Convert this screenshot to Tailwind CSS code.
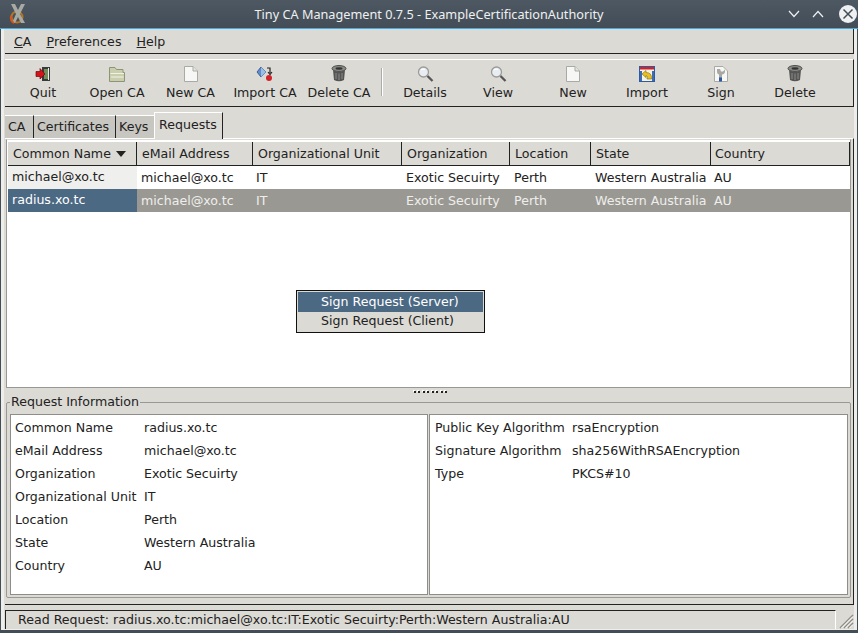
<!DOCTYPE html>
<html lang="en">
<head>
  <meta charset="UTF-8" />
  <title>Tiny CA Management</title>
  <script src="https://cdn.jsdelivr.net/npm/@tailwindcss/browser@4"></script>
</head>
<body class="w-[858px] h-[633px] overflow-hidden relative bg-[#dcdad5] flex flex-col font-['DejaVu_Sans',sans-serif] text-[12.6px] leading-[16px] text-[#222]">

  <!-- title bar -->
  <div class="h-[28px] shrink-0 flex items-center relative bg-gradient-to-b from-[#4d5862] to-[#434d57] text-[#eff0f1] font-['Noto_Sans',sans-serif] text-[12.7px]">
    <svg class="absolute left-[8px] top-[3px]" width="20" height="21" viewBox="0 0 20 21">
      <circle cx="9" cy="14" r="5.5" fill="none" stroke="#b5761f" stroke-width="2" />
      <path d="M3 1 L7 1 L10 7 L13 1 L17 1 L12 11 L17 20 L13 20 L10 14 L7 20 L4 20 L8 11 Z" fill="#a9a9a4" />
      <path d="M3 13 Q2 18 6 20" fill="none" stroke="#d4541c" stroke-width="2" />
    </svg>
    <div class="w-full text-center">Tiny CA Management 0.7.5 - ExampleCertificationAuthority</div>
    <svg class="absolute right-[58px] top-[10px]" width="12" height="8" viewBox="0 0 12 8"><path d="M1 1 L6 6.5 L11 1" fill="none" stroke="#eff0f1" stroke-width="1.2" /></svg>
    <svg class="absolute right-[34px] top-[10px]" width="12" height="8" viewBox="0 0 12 8"><path d="M1 7 L6 1.5 L11 7" fill="none" stroke="#eff0f1" stroke-width="1.2" /></svg>
    <svg class="absolute right-[1px] top-[5px]" width="18" height="18" viewBox="0 0 18 18"><circle cx="9" cy="9" r="9" fill="#eff0f1" /><path d="M4.500 4.500 L13.500 13.500 M13.500 4.500 L4.500 13.500" stroke="#434d57" stroke-width="1.500" /></svg>
  </div>
  <div class="h-px shrink-0 bg-[#3daee9]"></div>

  <!-- window content -->
  <div class="flex-1 min-h-0 flex flex-col border-l-[1px] border-r-[1px] border-[#434d57]">
    <div class="flex-1 min-h-0 flex flex-col border-l-[3px] border-r-[3px] border-[#eeedea]">

      <!-- menu bar -->
      <div class="h-[25px] shrink-0 ml-px flex items-center gap-[15px] pl-[9px] pt-[1px] border-b-[1px] border-r-[1px] border-[#222]">
        <span><u>C</u>A</span>
        <span class="tracking-[0.1px]"><u>P</u>references</span>
        <span><u>H</u>elp</span>
      </div>

      <!-- toolbar -->
      <div class="h-[48px] shrink-0 mt-[5px] ml-px flex border-t-[1px] border-t-white border-b-[1px] border-r-[1px] border-[#222]">
        <div class="w-[76px] flex flex-col items-center">
          <svg class="mt-[6px]" width="16" height="16" viewBox="0 0 16 16"><rect x="7" y="1" width="8" height="14" fill="#3a3a3a" /><rect x="9" y="3" width="4" height="10" fill="#6f8f5f" /><rect x="13" y="2" width="1" height="12" fill="#eee" /><path d="M1 5.500 H5 V2.500 L10 8 L5 13 V10.500 H1 Z" fill="#d3141c" stroke="#6e0a0e" stroke-width="0.7" /></svg>
          <span class="mt-[3px]">Quit</span>
        </div>
        <div class="w-[72px] flex flex-col items-center">
          <svg class="mt-[6px]" width="16" height="16" viewBox="0 0 16 16"><path d="M0.500 15.500 V1.500 H6 L7.500 3.500 H14 V6.500 H15.500 V15.500 Z" fill="#c9cfae" stroke="#8e9476" stroke-width="1" /><path d="M1.500 7.500 H15 M2 11 H14.500" stroke="#f1f3e2" stroke-width="1" /></svg>
          <span class="mt-[3px]">Open CA</span>
        </div>
        <div class="w-[75px] flex flex-col items-center">
          <svg class="mt-[6px]" width="16" height="16" viewBox="0 0 16 16"><path d="M1.500 0.500 H10 L14.500 5 V15.500 H1.500 Z" fill="#f7f7f5" stroke="#a9a9a5" stroke-width="1" /><path d="M10 0.500 V5 H14.500" fill="#e4e4e0" stroke="#a9a9a5" stroke-width="1" /></svg>
          <span class="mt-[3px]">New CA</span>
        </div>
        <div class="w-[74px] flex flex-col items-center">
          <svg class="mt-[6px]" width="18" height="16" viewBox="0 0 18 16"><path d="M5 1 L10 6 L5 11 L1 6 Z" fill="#5d8fd0" stroke="#27497c" stroke-width="0.8" /><path d="M5 1 L10 6 L5 11 Z" fill="#9dbde6" /><path d="M11 2 H14 V7 M12 6 L14 8.500 L16 6" fill="none" stroke="#222" stroke-width="1.200" /><circle cx="13" cy="12" r="3" fill="#d3222a" /></svg>
          <span class="mt-[3px] whitespace-nowrap">Import CA</span>
        </div>
        <div class="w-[74px] flex flex-col items-center">
          <svg class="mt-[5px]" width="16" height="17" viewBox="0 0 16 17"><ellipse cx="8" cy="3.500" rx="7" ry="3" fill="#8a8a86" stroke="#333" stroke-width="0.8" /><ellipse cx="8" cy="3.500" rx="3.500" ry="1.200" fill="#333" /><path d="M2 5 L3 15 Q8 17.500 13 15 L14 5 Q8 8 2 5 Z" fill="#555" /><path d="M5 8 V14 M8 8.500 V15 M11 8 V14" stroke="#8d8d8a" stroke-width="1" /></svg>
          <span class="mt-[3px] whitespace-nowrap">Delete CA</span>
        </div>
        <div class="w-[12px] flex justify-center pt-[8px]"><div class="w-[2px] h-[28px] bg-white border-l border-[#aaa]"></div></div>
        <div class="w-[74px] flex flex-col items-center">
          <svg class="mt-[6px]" width="17" height="16" viewBox="0 0 17 16"><circle cx="6.500" cy="6" r="5" fill="#e8edf2" stroke="#9b9b98" stroke-width="1.300" /><path d="M4 4 Q6 2.500 8 3.500" fill="none" stroke="#fff" stroke-width="1.200" /><path d="M10.500 10 L15.500 15" stroke="#555" stroke-width="2.300" /></svg>
          <span class="mt-[3px]">Details</span>
        </div>
        <div class="w-[72px] flex flex-col items-center">
          <svg class="mt-[6px]" width="17" height="16" viewBox="0 0 17 16"><circle cx="6.500" cy="6" r="5" fill="#e8edf2" stroke="#9b9b98" stroke-width="1.300" /><path d="M4 4 Q6 2.500 8 3.500" fill="none" stroke="#fff" stroke-width="1.200" /><path d="M10.500 10 L15.500 15" stroke="#555" stroke-width="2.300" /></svg>
          <span class="mt-[3px]">View</span>
        </div>
        <div class="w-[78px] flex flex-col items-center">
          <svg class="mt-[6px]" width="16" height="16" viewBox="0 0 16 16"><path d="M1.500 0.500 H10 L14.500 5 V15.500 H1.500 Z" fill="#f7f7f5" stroke="#a9a9a5" stroke-width="1" /><path d="M10 0.500 V5 H14.500" fill="#e4e4e0" stroke="#a9a9a5" stroke-width="1" /></svg>
          <span class="mt-[3px]">New</span>
        </div>
        <div class="w-[70px] flex flex-col items-center">
          <svg class="mt-[6px]" width="16" height="16" viewBox="0 0 16 16"><rect x="0.500" y="0.500" width="15" height="15" fill="#f4f2e4" stroke="#2d5aa0" /><rect x="1" y="1" width="14" height="2.500" fill="#d3222a" /><rect x="1" y="5" width="2" height="10" fill="#3d6cb5" /><rect x="13" y="5" width="2" height="10" fill="#3d6cb5" /><path d="M3 8 L7 4.500 V6.500 Q13 6.500 12.500 13 H8 Q9 9.500 7 9.500 V11.500 Z" fill="#e9c01f" stroke="#7d6a10" stroke-width="0.6" /></svg>
          <span class="mt-[3px]">Import</span>
        </div>
        <div class="w-[78px] flex flex-col items-center">
          <svg class="mt-[6px]" width="16" height="16" viewBox="0 0 16 16"><path d="M1.500 0.500 H10 L14.500 5 V15.500 H1.500 Z" fill="#f7f7f5" stroke="#a9a9a5" stroke-width="1" /><path d="M4 3 V6 Q4 8 6 8.500 V15 H9 V8.500 Q12 8 12 5.500 V3.500 L10 5.500 H8 L7 3 Z" fill="#a8a8a4" /><rect x="6" y="11.500" width="3" height="4" fill="#2d5aa0" /></svg>
          <span class="mt-[3px]">Sign</span>
        </div>
        <div class="w-[70px] flex flex-col items-center">
          <svg class="mt-[5px]" width="16" height="17" viewBox="0 0 16 17"><ellipse cx="8" cy="3.500" rx="7" ry="3" fill="#8a8a86" stroke="#333" stroke-width="0.8" /><ellipse cx="8" cy="3.500" rx="3.500" ry="1.200" fill="#333" /><path d="M2 5 L3 15 Q8 17.500 13 15 L14 5 Q8 8 2 5 Z" fill="#555" /><path d="M5 8 V14 M8 8.500 V15 M11 8 V14" stroke="#8d8d8a" stroke-width="1" /></svg>
          <span class="mt-[3px]">Delete</span>
        </div>
      </div>

      <!-- tabs -->
      <div class="h-[31px] shrink-0 ml-px flex items-end">
        <div class="h-[23px] w-[29px] bg-[#c8c6c1] border-t border-t-white border-r border-r-[#222] pl-[3px] pt-[3px]">CA</div>
        <div class="h-[23px] w-[82px] bg-[#c8c6c1] border-t border-t-white border-r border-r-[#222] pl-[3px] pt-[3px]">Certificates</div>
        <div class="h-[23px] w-[38px] bg-[#c8c6c1] border-t border-t-white pl-[3px] pt-[3px]">Keys</div>
        <div class="h-[27px] w-[69px] -mb-px relative bg-[#dcdad5] border-t border-l border-white border-r-[1px] border-r-[#222] pl-[4px] pt-[4px]">Requests</div>
      </div>

      <!-- notebook page -->
      <div class="h-[467px] shrink-0 ml-px border-t border-t-white border-r border-r-[#222] border-b border-b-[#222]">

        <!-- request list -->
        <div class="h-[249px] ml-px mr-[2px] pt-[1px] pl-px bg-white border border-[#9a9892] border-t-[#dcdad5]">
          <div class="grid grid-cols-[129px_116px_149px_108px_81px_120px_139px] h-[25px] bg-[#dcdad5] border-t border-t-white border-b border-b-[#222]">
            <div class="border-r border-[#222] pl-[5px] pt-[4px] flex items-start gap-[5px]">Common Name
              <svg class="mt-[5px]" width="10" height="6" viewBox="0 0 10 6"><path d="M0 0 H10 L5 6 Z" fill="#222" /></svg>
            </div>
            <div class="border-r border-[#222] pl-[5px] pt-[4px]">eMail Address</div>
            <div class="border-r border-[#222] pl-[5px] pt-[4px]">Organizational Unit</div>
            <div class="border-r border-[#222] pl-[5px] pt-[4px]">Organization</div>
            <div class="border-r border-[#222] pl-[5px] pt-[4px]">Location</div>
            <div class="border-r border-[#222] pl-[5px] pt-[4px]">State</div>
            <div class="border-r border-[#222] pl-[4px] pt-[4px]">Country</div>
          </div>
          <div class="grid grid-cols-[129px_116px_149px_108px_81px_120px_139px] h-[23px] items-center">
            <div class="h-full bg-[#efefed] pl-[4px] pt-[3px]">michael@xo.tc</div>
            <div class="pl-[4px]">michael@xo.tc</div>
            <div class="pl-[3px]">IT</div>
            <div class="pl-[4px]">Exotic Secuirty</div>
            <div class="pl-[4px]">Perth</div>
            <div class="pl-[4px] whitespace-nowrap">Western Australia</div>
            <div class="pl-[3px]">AU</div>
          </div>
          <div class="grid grid-cols-[129px_116px_149px_108px_81px_120px_139px] h-[23px] items-center bg-[#9a9892] text-[#eeeeec]">
            <div class="h-full bg-[#4b6983] text-white pl-[4px] pt-[3px]">radius.xo.tc</div>
            <div class="pl-[4px]">michael@xo.tc</div>
            <div class="pl-[3px]">IT</div>
            <div class="pl-[4px]">Exotic Secuirty</div>
            <div class="pl-[4px]">Perth</div>
            <div class="pl-[4px] whitespace-nowrap">Western Australia</div>
            <div class="pl-[3px]">AU</div>
          </div>
        </div>

        <!-- pane handle -->
        <div class="h-[14px] flex justify-center items-start pt-[3px] pl-[3px]">
          <div class="w-[34px] flex justify-between">
            <i class="w-[2px] h-[2px] bg-[#222] shadow-[-1px_-1px_0_#fff]"></i><i class="w-[2px] h-[2px] bg-[#222] shadow-[-1px_-1px_0_#fff]"></i><i class="w-[2px] h-[2px] bg-[#222] shadow-[-1px_-1px_0_#fff]"></i><i class="w-[2px] h-[2px] bg-[#222] shadow-[-1px_-1px_0_#fff]"></i><i class="w-[2px] h-[2px] bg-[#222] shadow-[-1px_-1px_0_#fff]"></i><i class="w-[2px] h-[2px] bg-[#222] shadow-[-1px_-1px_0_#fff]"></i><i class="w-[2px] h-[2px] bg-[#222] shadow-[-1px_-1px_0_#fff]"></i><i class="w-[2px] h-[2px] bg-[#222] shadow-[-1px_-1px_0_#fff]"></i>
          </div>
        </div>

        <!-- request information -->
        <div class="relative h-[196px] ml-[1px] mr-[2px] border border-[#9a9892] rounded-[2px] pl-[3px] pr-[2px] pt-[11px] pb-[2px]">
          <span class="absolute left-[3px] -top-[9px] bg-[#dcdad5] px-px">Request Information</span>
          <div class="h-full grid grid-cols-[418px_419px] gap-[1px]">
            <div class="bg-white border border-[#8f8d88] pl-[4px] pt-[1px] grid grid-cols-[129px_1fr] auto-rows-[23px] items-center">
              <span>Common Name</span><span>radius.xo.tc</span>
              <span>eMail Address</span><span>michael@xo.tc</span>
              <span>Organization</span><span>Exotic Secuirty</span>
              <span>Organizational Unit</span><span>IT</span>
              <span>Location</span><span>Perth</span>
              <span>State</span><span>Western Australia</span>
              <span>Country</span><span>AU</span>
            </div>
            <div class="bg-white border border-[#8f8d88] pl-[5px] pt-[1px] grid grid-cols-[137px_1fr] auto-rows-[23px] items-center">
              <span>Public Key Algorithm</span><span>rsaEncryption</span>
              <span>Signature Algorithm</span><span>sha256WithRSAEncryption</span>
              <span>Type</span><span>PKCS#10</span>
            </div>
          </div>
        </div>
      </div>

      <!-- status bar -->
      <div class="h-[19px] shrink-0 mt-[5px] ml-px flex">
        <div class="flex-1 border-t border-l border-[#222] border-r border-r-white pl-[12px] pt-[1px] whitespace-nowrap">Read Request: radius.xo.tc:michael@xo.tc:IT:Exotic Secuirty:Perth:Western Australia:AU</div>
        <svg class="ml-[3px]" width="15" height="19" viewBox="0 0 15 19"><path d="M1 18 L14 5 M5 18 L14 9 M9 18 L14 13" stroke="#8f8d88" stroke-width="1.500" /><path d="M2.500 18 L14 6.500 M6.500 18 L14 10.500 M10.500 18 L14 14.500" stroke="#fff" stroke-width="1" /></svg>
      </div>
      <div class="flex-1 bg-[#eeedea]"></div>
    </div>
    <div class="h-[3px] shrink-0 bg-[#434d57]"></div>
  </div>

  <!-- popup menu -->
  <div class="absolute left-[296px] top-[290px] w-[189px] h-[43px] bg-[#dcdad5] border border-[#111] p-px">
    <div class="h-[20px] bg-[#4b6983] text-white pt-[2px] pl-[23px]">Sign Request (Server)</div>
    <div class="h-[20px] pt-[1px] pl-[23px]">Sign Request (Client)</div>
  </div>
</body>
</html>
